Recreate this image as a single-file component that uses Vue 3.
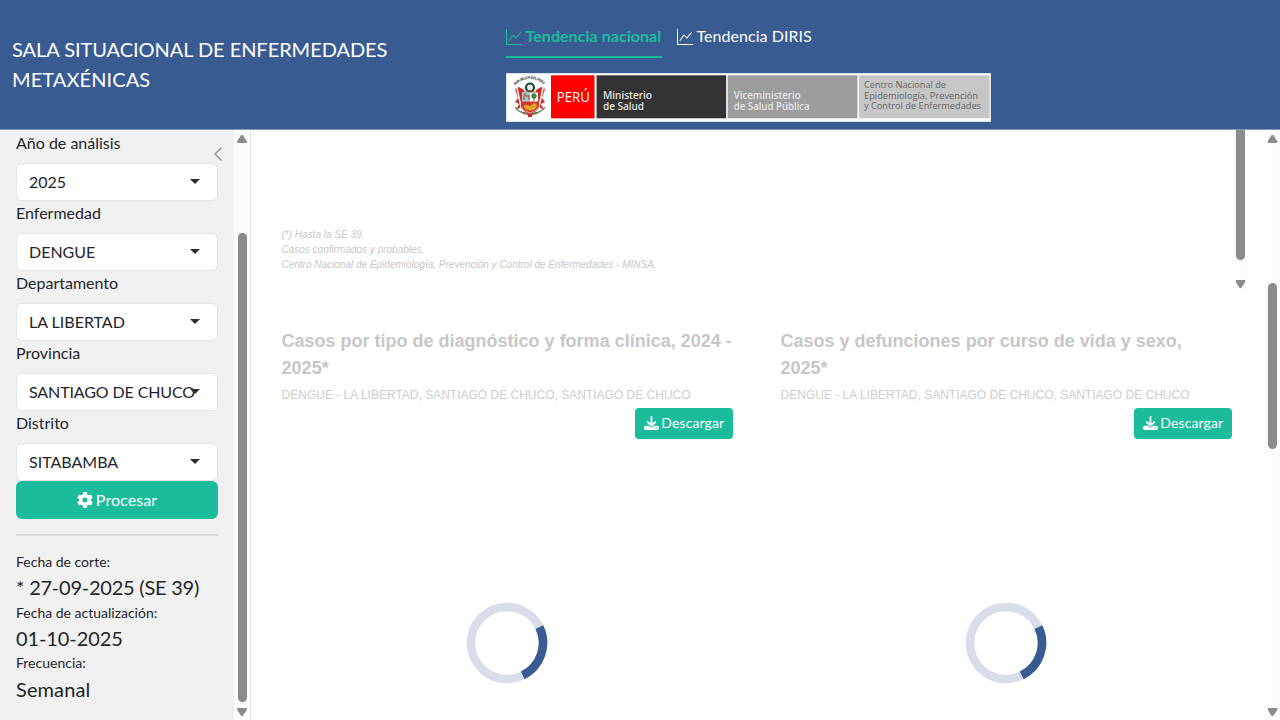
<script setup>
const filters = [
  { label: 'Año de análisis', value: '2025' },
  { label: 'Enfermedad', value: 'DENGUE' },
  { label: 'Departamento', value: 'LA LIBERTAD' },
  { label: 'Provincia', value: 'SANTIAGO DE CHUCO', tight: true },
  { label: 'Distrito', value: 'SITABAMBA' },
]
const facts = [
  { label: 'Fecha de corte:', value: '* 27-09-2025 (SE 39)', date: true },
  { label: 'Fecha de actualización:', value: '01-10-2025' },
  { label: 'Frecuencia:', value: 'Semanal' },
]
const tabs = [
  { name: 'Tendencia nacional', active: true },
  { name: 'Tendencia DIRIS', active: false },
]
const place = 'DENGUE - LA LIBERTAD, SANTIAGO DE CHUCO, SANTIAGO DE CHUCO'
const cards = [
  { title: 'Casos por tipo de diagnóstico y forma clínica, 2024 - 2025*' },
  { title: 'Casos y defunciones por curso de vida y sexo, 2025*' },
]
</script>

<template>
  <div class="page">
    <header class="header">
      <h1 class="title"><span class="tight">SALA SITUACIONAL DE ENFERMEDADES</span><br /><span class="wide">METAXÉNICAS</span></h1>
      <div class="nav-area">
        <nav class="tabs">
          <a v-for="t in tabs" :key="t.name" class="tab" :class="{ active: t.active }">
            <svg class="tab-icon" viewBox="0 0 16 16" width="16" height="16"><path fill="currentColor" fill-rule="evenodd" d="M0 0h1v15h15v1H0V0Zm14.817 3.113a.5.5 0 0 1 .07.704l-4.5 5.5a.5.5 0 0 1-.74.037L7.06 6.767l-3.656 5.027a.5.5 0 0 1-.808-.588l4-5.5a.5.5 0 0 1 .758-.06l2.609 2.61 4.15-5.073a.5.5 0 0 1 .704-.07Z" /></svg>
            <span>{{ t.name }}</span>
          </a>
        </nav>
        <svg class="logo" width="485" height="49" viewBox="0 0 485 49">
          <rect width="485" height="49" fill="#c9cdd6" />
          <rect x="0.6" y="0.6" width="483.8" height="47.8" fill="#fff" />
          <g>
            <path id="motto" d="M9 12.5Q24 -1 39 12.5" fill="none" />
            <text class="motto"><textPath href="#motto" textLength="32">REPUBLICA DEL PERU</textPath></text>
            <path d="M9 16l4-2 5 3-1 16-7 4 3-6-4-2 3-4zM39 16l-4-2-5 3 1 16 7 4-3-6 4-2-3-4z" fill="#cf2b2b" />
            <path d="M11 15l4 19M37 15l-4 19" stroke="#f3eeee" stroke-width="1.6" />
            <path d="M14 38q10 5 20 0l-3 3-5 1v2h-4v-2l-5-1z" fill="#b5302e" />
            <path d="M9 34q4 6 11 6M39 34q-4 6-11 6" stroke="#4f8a4c" stroke-width="1.3" fill="none" />
            <circle cx="24" cy="14.5" r="4" fill="#e8f0e8" stroke="#1f4a30" stroke-width="2.2" />
            <path d="M15.5 19h17v14q0 5-8.5 7.500-8.500-2.500-8.500-7.500z" fill="#fff" stroke="#b53b31" />
            <path d="M16 19.5H24v9h-8z" fill="#9dcbd8" />
            <path d="M18 27v-4l1-2 1 2h3v4" stroke="#b36135" stroke-width="1.3" fill="none" />
            <circle cx="28" cy="23" r="2.7" fill="#3f8a46" />
            <path d="M28 24v4" stroke="#7a542c" />
            <path d="M16 28.5h16V33q0 4-8 6.5-8-2.5-8-6.5z" fill="#d4342b" />
            <path d="M17.5 33q2-3 6 0 2 0 4-3l3 1q1 6-6 6.5-5 0-7-4.5z" fill="#e2a52c" />
          </g>
          <rect x="45" y="2.3" width="43.5" height="43" fill="#fe0000" />
          <rect x="90.6" y="2.3" width="129.4" height="43" fill="#333" />
          <rect x="220" y="2.3" width="2" height="43" fill="#e4e0e4" />
          <rect x="222" y="2.3" width="129.5" height="43" fill="#9d9d9d" />
          <rect x="353" y="2.3" width="130.5" height="43" fill="#c6c6c6" />
          <text x="50.8" y="29" class="peru" textLength="33" lengthAdjust="spacingAndGlyphs">PERÚ</text>
          <g class="light">
            <text x="97" y="26.4" textLength="49" lengthAdjust="spacingAndGlyphs">Ministerio</text>
            <text x="97" y="37" textLength="41" lengthAdjust="spacingAndGlyphs">de Salud</text>
          </g>
          <g class="light dim">
            <text x="227.7" y="26.4" textLength="67" lengthAdjust="spacingAndGlyphs">Viceministerio</text>
            <text x="227.7" y="37" textLength="76" lengthAdjust="spacingAndGlyphs">de Salud Pública</text>
          </g>
          <g class="dark">
            <text x="358" y="15" textLength="82" lengthAdjust="spacingAndGlyphs">Centro Nacional de</text>
            <text x="358" y="25.8" textLength="114" lengthAdjust="spacingAndGlyphs">Epidemiología, Prevención</text>
            <text x="358" y="36.4" textLength="117" lengthAdjust="spacingAndGlyphs">y Control de Enfermedades</text>
          </g>
        </svg>
      </div>
    </header>

    <div class="body">
      <aside class="sidebar">
        <div class="side-content">
          <svg class="collapse" viewBox="0 0 16 16" width="16" height="16"><path fill="#919191" stroke="#919191" stroke-width=".6" d="M11.354 1.646a.5.5 0 0 1 0 .708L5.707 8l5.647 5.646a.5.5 0 0 1-.708.708l-6-6a.5.5 0 0 1 0-.708l6-6a.5.5 0 0 1 .708 0z" /></svg>
          <div v-for="f in filters" :key="f.label" class="field">
            <label class="label">{{ f.label }}</label>
            <div class="select">
              <span :class="{ snug: f.tight }">{{ f.value }}</span>
              <i class="caret"></i>
            </div>
          </div>
          <button class="process">
            <svg viewBox="0 0 512 512" width="16" height="16"><path fill="currentColor" d="M495.9 166.6c3.2 8.7 .5 18.4-6.4 24.6l-43.3 39.4c1.1 8.3 1.7 16.8 1.7 25.4s-.6 17.1-1.7 25.4l43.3 39.4c6.9 6.2 9.6 15.9 6.4 24.6c-4.4 11.9-9.7 23.3-15.8 34.3l-4.7 8.1c-6.6 11-14 21.4-22.1 31.2c-5.9 7.2-15.7 9.6-24.5 6.8l-55.7-17.7c-13.4 10.3-28.2 18.9-44 25.4l-12.5 57.1c-2 9.1-9 16.3-18.2 17.8c-13.8 2.3-28 3.5-42.5 3.5s-28.7-1.2-42.5-3.5c-9.2-1.5-16.2-8.7-18.2-17.8l-12.5-57.1c-15.8-6.5-30.6-15.1-44-25.4L83.1 425.9c-8.8 2.8-18.6 .3-24.5-6.8c-8.1-9.8-15.5-20.2-22.1-31.2l-4.7-8.1c-6.1-11-11.4-22.4-15.8-34.3c-3.2-8.7-.5-18.4 6.4-24.6l43.3-39.4C64.6 273.1 64 264.6 64 256s.6-17.1 1.7-25.4L22.4 191.2c-6.9-6.2-9.6-15.9-6.4-24.6c4.4-11.9 9.7-23.3 15.8-34.3l4.7-8.1c6.6-11 14-21.4 22.1-31.2c5.9-7.2 15.7-9.6 24.5-6.8l55.7 17.7c13.4-10.3 28.2-18.9 44-25.4l12.5-57.1c2-9.1 9-16.3 18.2-17.8C227.3 1.2 241.5 0 256 0s28.7 1.2 42.5 3.5c9.2 1.5 16.2 8.7 18.2 17.8l12.5 57.1c15.8 6.5 30.6 15.1 44 25.4l55.7-17.7c8.8-2.8 18.6-.3 24.5 6.8c8.1 9.8 15.5 20.2 22.1 31.2l4.7 8.1c6.1 11 11.4 22.4 15.8 34.3zM256 336a80 80 0 1 0 0-160 80 80 0 1 0 0 160z" /></svg>
            <span>Procesar</span>
          </button>
          <div class="rule"></div>
          <div v-for="f in facts" :key="f.label" class="fact">
            <div class="fact-label">{{ f.label }}</div>
            <div class="fact-value" :class="{ date: f.date }">{{ f.value }}</div>
          </div>
        </div>
        <div class="track side-track">
          <i class="arrow up"></i>
          <i class="thumb"></i>
          <i class="arrow down"></i>
        </div>
      </aside>

      <main class="main">
        <div class="content">
          <section class="upper">
            <div class="notes">
              <div>(*) Hasta la SE 39.</div>
              <div>Casos confirmados y probables.</div>
              <div>Centro Nacional de Epidemiología, Prevención y Control de Enfermedades - MINSA.</div>
            </div>
            <div class="inner-track">
              <i class="inner-thumb"></i>
              <i class="arrow down"></i>
            </div>
          </section>
          <section class="cards">
            <article v-for="c in cards" :key="c.title" class="card">
              <h2 class="card-title">{{ c.title }}</h2>
              <div class="card-sub">{{ place }}</div>
              <button class="download">
                <svg viewBox="0 0 512 512" width="15" height="14" preserveAspectRatio="none"><path fill="currentColor" d="M288 32c0-17.7-14.3-32-32-32s-32 14.3-32 32V274.7l-73.4-73.4c-12.5-12.5-32.8-12.5-45.3 0s-12.5 32.8 0 45.3l128 128c12.5 12.5 32.8 12.5 45.3 0l128-128c12.5-12.5 12.5-32.8 0-45.3s-32.8-12.5-45.3 0L288 274.7V32zM64 352c-35.3 0-64 28.7-64 64v32c0 35.3 28.7 64 64 64H448c35.3 0 64-28.7 64-64V416c0-35.3-28.7-64-64-64H346.5l-45.3 45.3c-25 25-65.5 25-90.5 0L165.5 352H64zm368 56a24 24 0 1 1 0 48 24 24 0 1 1 0-48z" /></svg>
                <span>Descargar</span>
              </button>
              <svg class="spinner" viewBox="-41 -41 82 82" width="82" height="82">
                <circle r="36" fill="none" stroke="#d7deea" stroke-width="8.6" />
                <circle r="36" fill="none" stroke="#385b91" stroke-width="8.6" pathLength="360" stroke-dasharray="90 270" transform="rotate(-26)" />
              </svg>
            </article>
          </section>
        </div>
        <div class="track main-track">
          <i class="arrow up"></i>
          <i class="thumb"></i>
          <i class="arrow down"></i>
        </div>
      </main>
    </div>
  </div>
</template>

<style>
body { margin: 0; overflow: hidden; }
</style>

<style scoped>
* { box-sizing: border-box; }
.page { width: 1280px; height: 720px; display: flex; flex-direction: column; overflow: hidden; background: #fff; color: #212529; font: 16px/24px Lato, "Liberation Sans", sans-serif; }
.header { flex: none; height: 130px; display: flex; background: #385b91; border-bottom: 1px solid #8398bb; color: #fff; }
.title { width: 494px; margin: 0; padding: 34px 0 0 12px; font-size: 20px; line-height: 30px; font-weight: 400; }
.tight { letter-spacing: -0.05px; }
.wide { letter-spacing: 0.1px; }
.snug { letter-spacing: -0.12px; }
.nav-area { padding: 16px 0 0 12px; }
.tabs { display: flex; gap: 15px; height: 57px; }
.tab { display: flex; gap: 3.5px; height: 42px; padding-top: 8px; border-bottom: 2px solid transparent; letter-spacing: 0.05px; }
.tab-icon { flex: none; margin-top: 5px; }
.tab.active { width: 156px; color: #1abc9c; font-weight: 700; border-color: #18bc9c; }
.logo { display: block; }
.motto { font: 700 3.8px "Open Sans", sans-serif; fill: #444; }
.peru { font: 15px "Open Sans", sans-serif; fill: #fff; }
.light { font: 500 9.8px "Noto Sans", sans-serif; fill: #e8e8e8; }
.dim { fill: #e6e6e6; }
.dark { font: 500 9.4px "Open Sans", sans-serif; fill: #666; }
.body { flex: 1; display: flex; min-height: 0; }
.sidebar { width: 251px; display: flex; background: #f1f1f1; border-right: 1px solid #e3e3e3; }
.side-content { position: relative; width: 234px; padding: 1px 16px 0; }
.collapse { position: absolute; left: 210px; top: 16px; }
.label { display: block; height: 32px; }
.select { display: flex; align-items: center; position: relative; width: 202px; height: 38px; padding: 0 12px; background: #fff; border: 1px solid #e1e4e8; border-radius: 6px; white-space: nowrap; }
.caret { position: absolute; right: 17px; top: 15px; border: 5px solid transparent; border-top-color: #2b2b2b; border-bottom: 0; }
.process { display: flex; align-items: center; justify-content: center; gap: 3px; width: 202px; height: 38px; padding: 0; border: 0; border-radius: 6px; background: #1abc9c; color: #fff; font: inherit; letter-spacing: 0.08px; }
.rule { height: 2px; width: 203px; margin: 15px 0; background: #dcdcdc; }
.fact { height: 51px; white-space: nowrap; }
.fact:last-child { margin-top: -1px; }
.fact:last-child .fact-label { margin-bottom: 1px; }
.fact-label { font-size: 14px; line-height: 21px; }
.fact-value { font-size: 20px; line-height: 30px; letter-spacing: -0.1px; }
.fact:last-child .fact-value { letter-spacing: 0.1px; }
.fact-value.date { letter-spacing: -0.24px; }
.track { display: flex; flex-direction: column; align-items: center; background: #fcfcfc; }
.side-track { width: 16px; }
.arrow { flex: none; width: 10px; height: 8px; background: #8b8b8b; }
.arrow.up { margin-top: 5px; clip-path: polygon(42% 0, 58% 0, 100% 80%, 95% 100%, 5% 100%, 0 80%); }
.arrow.down { margin-top: auto; margin-bottom: 4px; clip-path: polygon(5% 0, 95% 0, 100% 20%, 58% 100%, 42% 100%, 0 20%); }
.thumb { width: 9px; border-radius: 5px; background: #8b8b8b; }
.side-track .thumb { height: 469px; margin-top: 90px; }
.main { flex: 1; display: flex; min-width: 0; }
.content { width: 1014px; font-family: "Liberation Sans", Arial, sans-serif; }
.upper { display: flex; justify-content: space-between; height: 162px; padding: 0 17px 0 30.5px; }
.notes { margin-top: 97px; color: #c7c7c7; font-size: 10px; line-height: 15px; font-style: italic; }
.inner-track { display: flex; flex-direction: column; align-items: center; width: 15px; background: #fcfcfc; }
.inner-thumb { width: 9px; height: 130px; border-radius: 0 0 5px 5px; background: #8b8b8b; }
.cards { display: grid; grid-template-columns: 451.7px 451.7px; gap: 47.3px; padding: 36px 0 0 30.6px; }
.card { display: flex; flex-direction: column; }
.card-title { margin: 0; color: #c7c7c7; font-size: 18px; line-height: 27px; font-weight: 700; }
.card-sub { height: 26px; color: #cdcdcd; font-size: 12px; line-height: 27px; white-space: nowrap; }
.download { align-self: flex-end; display: flex; align-items: center; justify-content: center; gap: 2px; width: 98px; height: 31px; padding: 0 0 2px; border: 0; border-radius: 4px; background: #1abc9c; color: #fff; font: 14px/21px Lato, sans-serif; letter-spacing: 0.1px; }
.spinner { align-self: center; margin-top: 163px; }
.main-track { width: 15px; }
.main-track .thumb { height: 166px; margin-top: 140px; }
</style>
